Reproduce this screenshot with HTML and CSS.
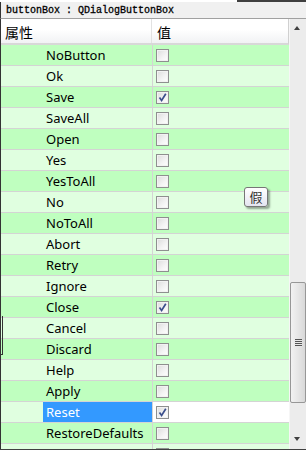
FILE: index.html
```html
<!DOCTYPE html>
<html lang="zh-CN">
<head>
    <meta charset="UTF-8">
    <title>属性编辑器</title>
    <link rel="stylesheet" href="styles.css">
</head>
<body>

<div class="topline"></div>
<div class="titlebar">buttonBox : QDialogButtonBox</div>

<div class="browser">
    <div class="tree">
        <div class="header">
            <div class="hcol hname">属性</div>
            <div class="hcol hvalue">值</div>
        </div>
        <div class="rows" id="rows"></div>
    </div>
    <div class="scrollbar">
        <div class="arrow up"></div>
        <div class="track">
            <div class="thumb"><span class="grip"></span></div>
        </div>
        <div class="arrow down"></div>
    </div>
</div>
<div class="bottomline"></div>

<!-- 窗口左侧露出的边框 -->
<div class="edge"></div>

<!-- 提示框 -->
<div class="tip">假</div>

<script>
    // 标准按钮列表，true 表示已勾选
    const buttons = [
        ['NoButton', false], ['Ok', false], ['Save', true], ['SaveAll', false],
        ['Open', false], ['Yes', false], ['YesToAll', false], ['No', false],
        ['NoToAll', false], ['Abort', false], ['Retry', false], ['Ignore', false],
        ['Close', true], ['Cancel', false], ['Discard', false], ['Help', false],
        ['Apply', false], ['Reset', true], ['RestoreDefaults', false], ['', false]
    ];

    const check = '<svg viewBox="0 0 11 11" width="11" height="11"><path d="M2.5 5.5 L4.6 8.4 L8.8 1.8" fill="none" stroke="#3b4f8c" stroke-width="1.7"/></svg>';

    const rows = document.getElementById('rows');
    buttons.forEach(function (b, i) {
        const row = document.createElement('div');
        row.className = 'row ' + (i % 2 === 0 ? 'dark' : 'light');
        if (b[0] === 'Reset') row.className += ' selected';
        row.innerHTML =
            '<div class="indent"></div>' +
            '<div class="name">' + b[0] + '</div>' +
            '<div class="value"><span class="box">' + (b[1] ? check : '') + '</span></div>';
        rows.appendChild(row);
    });
</script>

</body>
</html>
```

FILE: styles.css
```css
body {
    margin: 0;
    width: 306px;
    height: 450px;
    overflow: hidden;
    position: relative;
    background-color: #f0f0f0;
    font-family: "Noto Sans", "Noto Sans CJK SC", sans-serif;
    font-size: 13px;
    color: #000;
}
.topline {
    height: 2px;
    background: linear-gradient(to right, #ffffff 0, #ffffff 237px, #404040 237px);
}
.titlebar {
    height: 16px;
    line-height: 17px;
    padding-left: 5px;
    border-left: 1px solid #333;
    border-bottom: 1px solid #a0a0a0;
    background-color: #f0f0f0;
    font-family: "Liberation Mono", monospace;
    font-size: 10px;
    color: #000;
    -webkit-text-stroke: 0.3px #000;
}
.browser {
    display: flex;
    height: 430px;
    border-left: 1px solid #333;
}
.tree {
    width: 289px;
    overflow: hidden;
    background-color: #fff;
}
.header {
    display: flex;
    height: 24px;
    border-bottom: 2px solid #d8d8d8;
    border-right: 1px solid #d0d0d0;
    background: linear-gradient(to bottom, #ffffff 0%, #ffffff 45%, #f1f2f4 100%);
    font-size: 14px;
}
.hcol {
    line-height: 27px;
}
.hname {
    width: 146px;
    padding-left: 4px;
    border-right: 1px solid #e2e2e2;
}
.hvalue {
    padding-left: 5px;
}
.row {
    display: flex;
    height: 20px;
    line-height: 20px;
    border-bottom: 1px solid #d4d4d4;
}
.dark {
    background-color: #bfffbf;
}
.light {
    background-color: #e0ffe0;
}
.indent {
    width: 42px;
}
.name {
    width: 106px;
    padding-left: 3px;
    border-right: 1px solid #d4d4d4;
    white-space: nowrap;
}
.value {
    flex: 1;
    display: flex;
    align-items: center;
    padding-left: 3px;
}
.selected .name {
    background-color: #3399ff;
    color: #fff;
}
.selected .value {
    background-color: #fff;
}
.box {
    width: 11px;
    height: 11px;
    border: 1px solid #8e8f8f;
    background: linear-gradient(135deg, #dcdcdc 0%, #f4f4f4 60%, #ffffff 100%);
    box-shadow: inset 0 0 0 1px #f2f2f2;
    display: block;
}
.box svg {
    display: block;
}
.scrollbar {
    width: 16px;
    display: flex;
    flex-direction: column;
    background-color: #ececec;
    border-left: 1px solid #f6f6f6;
}
.arrow {
    height: 17px;
    position: relative;
}
.arrow::after {
    content: "";
    position: absolute;
    left: 4px;
    border-left: 3.5px solid transparent;
    border-right: 3.5px solid transparent;
}
.up::after {
    top: 7px;
    border-bottom: 4px solid #404040;
}
.down::after {
    top: 5px;
    border-top: 4px solid #404040;
}
.track {
    flex: 1;
    padding-top: 246px;
}
.thumb {
    height: 119px;
    border: 1px solid #979797;
    border-radius: 2px;
    background: linear-gradient(to right, #f2f2f2 0%, #e6e6e6 50%, #d8d8d8 100%);
    display: flex;
    align-items: center;
    justify-content: center;
}
.grip {
    width: 7px;
    height: 8px;
    background: repeating-linear-gradient(to bottom, #555 0, #555 1px, #e8e8e8 1px, #e8e8e8 2px);
}
.bottomline {
    height: 1px;
    background-color: #404040;
}
.edge {
    position: absolute;
    left: 0;
    top: 316px;
    width: 2px;
    height: 38px;
    border-right: 1px solid #333;
    border-bottom: 1px solid #333;
}
.tip {
    position: absolute;
    left: 244px;
    top: 187px;
    width: 22px;
    height: 18px;
    line-height: 18px;
    text-align: center;
    font-size: 13px;
    color: #333;
    border: 1px solid #767676;
    border-radius: 3px;
    background: linear-gradient(to bottom, #ffffff 0%, #e4e5f0 100%);
    box-shadow: 2px 2px 2px rgba(0, 0, 0, 0.35);
}
```
